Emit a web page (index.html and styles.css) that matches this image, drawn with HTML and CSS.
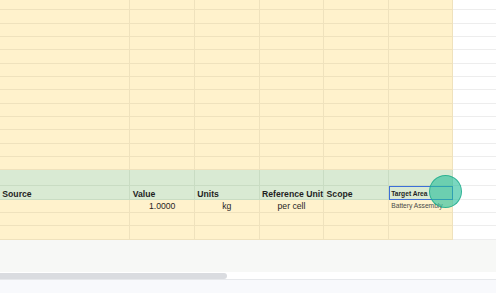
FILE: index.html
```html
<!DOCTYPE html>
<html>
<head>
<meta charset="utf-8">
<link rel="stylesheet" href="styles.css">
</head>
<body>
<div class="sheet">
  <div class="grid">
    <div class="row r-top"><div class="c"></div><div class="c"></div><div class="c"></div><div class="c"></div><div class="c"></div><div class="c"></div><div class="w"></div></div>
    <div class="row"><div class="c"></div><div class="c"></div><div class="c"></div><div class="c"></div><div class="c"></div><div class="c"></div><div class="w"></div></div>
    <div class="row"><div class="c"></div><div class="c"></div><div class="c"></div><div class="c"></div><div class="c"></div><div class="c"></div><div class="w"></div></div>
    <div class="row"><div class="c"></div><div class="c"></div><div class="c"></div><div class="c"></div><div class="c"></div><div class="c"></div><div class="w"></div></div>
    <div class="row"><div class="c"></div><div class="c"></div><div class="c"></div><div class="c"></div><div class="c"></div><div class="c"></div><div class="w"></div></div>
    <div class="row"><div class="c"></div><div class="c"></div><div class="c"></div><div class="c"></div><div class="c"></div><div class="c"></div><div class="w"></div></div>
    <div class="row"><div class="c"></div><div class="c"></div><div class="c"></div><div class="c"></div><div class="c"></div><div class="c"></div><div class="w"></div></div>
    <div class="row"><div class="c"></div><div class="c"></div><div class="c"></div><div class="c"></div><div class="c"></div><div class="c"></div><div class="w"></div></div>
    <div class="row"><div class="c"></div><div class="c"></div><div class="c"></div><div class="c"></div><div class="c"></div><div class="c"></div><div class="w"></div></div>
    <div class="row"><div class="c"></div><div class="c"></div><div class="c"></div><div class="c"></div><div class="c"></div><div class="c"></div><div class="w"></div></div>
    <div class="row"><div class="c"></div><div class="c"></div><div class="c"></div><div class="c"></div><div class="c"></div><div class="c"></div><div class="w"></div></div>
    <div class="row"><div class="c"></div><div class="c"></div><div class="c"></div><div class="c"></div><div class="c"></div><div class="c"></div><div class="w"></div></div>
    <div class="row"><div class="c"></div><div class="c"></div><div class="c"></div><div class="c"></div><div class="c"></div><div class="c"></div><div class="w"></div></div>
    <div class="row r-green1 green"><div class="c"></div><div class="c"></div><div class="c"></div><div class="c"></div><div class="c"></div><div class="c"></div><div class="w"></div></div>
    <div class="row r-head green">
      <div class="c h">Source</div>
      <div class="c h">Value</div>
      <div class="c h">Units</div>
      <div class="c h">Reference Unit</div>
      <div class="c h">Scope</div>
      <div class="c h small selected">Target Area</div>
      <div class="w"></div>
    </div>
    <div class="row data">
      <div class="c"></div>
      <div class="c d">1.0000</div>
      <div class="c d">kg</div>
      <div class="c d">per cell</div>
      <div class="c"></div>
      <div class="c d left small muted">Battery Assembly</div>
      <div class="w"></div>
    </div>
    <div class="row"><div class="c"></div><div class="c"></div><div class="c"></div><div class="c"></div><div class="c"></div><div class="c"></div><div class="w"></div></div>
    <div class="row"><div class="c"></div><div class="c"></div><div class="c"></div><div class="c"></div><div class="c"></div><div class="c"></div><div class="w"></div></div>
  </div>
  <div class="click-dot"></div>
  <div class="footer">
    <div class="footer-grey"></div>
    <div class="scroll-track"><div class="scroll-thumb"></div></div>
    <div class="footer-bottom"></div>
  </div>
</div>
</body>
</html>
```
FILE: styles.css
```css
html, body {
  margin: 0;
  padding: 0;
  background: #ffffff;
}
body {
  width: 496px;
  height: 293px;
  overflow: hidden;
  font-family: "Liberation Sans", Arial, sans-serif;
}
.sheet {
  position: relative;
  width: 496px;
  height: 293px;
  display: flex;
  flex-direction: column;
}
.grid {
  display: flex;
  flex-direction: column;
}
.row {
  display: grid;
  grid-template-columns: 130.33px 64.67px 64.67px 64.67px 64.67px 64.33px 1fr;
  height: 13.33px;
}
.r-top { height: 10.33px; }
.r-green1 { height: 15.33px; }
.r-head { height: 14px; }
.c {
  box-sizing: border-box;
  background: #fff2cc;
  border-right: 1px solid #efe2bd;
  border-bottom: 1px solid #efe2bd;
  min-width: 0;
  white-space: nowrap;
  color: #1f1f1f;
  font-size: 8.67px;
  line-height: 10px;
}
.w {
  box-sizing: border-box;
  background: #ffffff;
  border-bottom: 1px solid #ededed;
}
.green .c {
  background: #d9ead3;
  border-right-color: #c9dcc3;
  border-bottom-color: #c9dcc3;
}
.h {
  font-weight: bold;
  display: flex;
  align-items: flex-end;
  padding-left: 2.3px;
}
.d {
  display: flex;
  align-items: center;
  justify-content: center;
  overflow: visible;
}
.d.left {
  justify-content: flex-start;
  padding-left: 2.3px;
}
.small {
  font-size: 6.67px;
}
.h.small {
  line-height: 8px;
  padding-bottom: 1px;
}
.muted {
  color: #4a4a4a;
}
.data .c {
  position: relative;
}
.data .c:last-of-type {
  overflow: visible;
}
.selected {
  position: relative;
  outline: 1.4px solid #3d6fd8;
  outline-offset: -1.4px;
  z-index: 1;
}
.click-dot {
  position: absolute;
  left: 429px;
  top: 174.5px;
  width: 33px;
  height: 33px;
  box-sizing: border-box;
  border-radius: 50%;
  background: rgba(40, 190, 155, 0.62);
  border: 1px solid rgba(28, 170, 138, 0.8);
  z-index: 2;
}
.footer {
  flex: 1;
  display: flex;
  flex-direction: column;
}
.footer-grey {
  height: 32.5px;
  background: #f7f8f6;
}
.scroll-track {
  height: 8px;
  background: #ffffff;
  padding-top: 1px;
  box-sizing: border-box;
  border-bottom: 1px solid #e6e8eb;
}
.scroll-thumb {
  width: 227px;
  height: 5.5px;
  background: #dadce0;
  border-radius: 0 3px 3px 0;
}
.footer-bottom {
  flex: 1;
  background: #f8f9fc;
}
```
